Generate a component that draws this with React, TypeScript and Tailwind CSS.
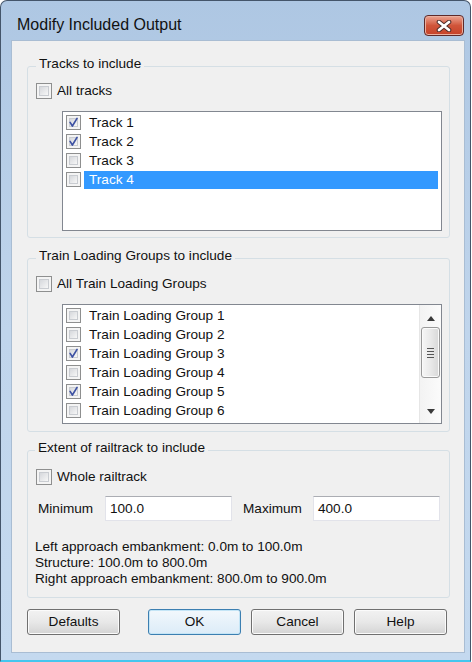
import type { ReactNode } from 'react'

function CheckBox({ checked, big }: { checked?: boolean; big?: boolean }) {
  return (
    <span
      className={`relative flex shrink-0 border border-[#8e8f8f] bg-[#f4f4f4] p-[2px] ${
        big ? 'h-[16px] w-[16px]' : 'h-[15px] w-[15px]'
      }`}
    >
      <span className="h-full w-full border border-[#c9ccd1] bg-gradient-to-br from-[#d6d8dc] to-[#f7f7f7]" />
      {checked && (
        <svg className="absolute inset-0 h-full w-full" viewBox="0 0 15 15">
          <path d="M3.6 7.4 L6.2 11.6 L11.6 2.8" fill="none" stroke="#3d51a3" strokeWidth="1.9" strokeLinecap="round" strokeLinejoin="round" />
        </svg>
      )}
    </span>
  )
}

function Group({ title, className, children }: { title: string; className: string; children: ReactNode }) {
  return (
    <fieldset className={`rounded-[3px] border border-[#d5dfe5] ${className}`}>
      <legend className="px-[3px] pb-[4px] leading-[16px]">{title}</legend>
      {children}
    </fieldset>
  )
}

function ListRow({ label, checked, selected }: { label: string; checked?: boolean; selected?: boolean }) {
  return (
    <div className="flex h-[19px] items-center pl-[3px] pr-[3px]">
      <CheckBox checked={checked} />
      <span
        className={`ml-[3px] flex h-[18px] flex-1 items-center pl-[5px] ${
          selected ? 'bg-[#3399ff] text-white' : ''
        }`}
      >
        {label}
      </span>
    </div>
  )
}

function Button({ label, primary, className = '' }: { label: string; primary?: boolean; className?: string }) {
  return (
    <button
      className={`flex h-[26px] w-[93px] items-center justify-center rounded-[3px] border ${
        primary
          ? 'border-[#3c7fb1] bg-gradient-to-b from-[#f2f8fc] to-[#dcecf8] shadow-[inset_0_0_0_1px_#c4e5f6]'
          : 'border-[#707070] bg-gradient-to-b from-[#f2f2f2] via-[#e8e8e8] to-[#d4d4d4] shadow-[inset_0_0_0_1px_#fbfbfb]'
      } ${className}`}
    >
      {label}
    </button>
  )
}

const tracks = [
  { label: 'Track 1', checked: true },
  { label: 'Track 2', checked: true },
  { label: 'Track 3' },
  { label: 'Track 4', selected: true },
]

const groups = [
  { label: 'Train Loading Group 1' },
  { label: 'Train Loading Group 2' },
  { label: 'Train Loading Group 3', checked: true },
  { label: 'Train Loading Group 4' },
  { label: 'Train Loading Group 5', checked: true },
  { label: 'Train Loading Group 6' },
]

export default function App() {
  return (
    <div className="h-[662px] w-[472px] bg-white font-['Liberation_Sans',Arial,sans-serif] text-[13.6px] leading-[16px] text-[#111]">
      <div className="flex h-full w-[471px] flex-col rounded-t-[7px] border-x border-t border-b-2 border-x-[#44556a] border-t-[#44556a] border-b-[#45c6ee] bg-gradient-to-b from-[#aec7e3] via-[#c0d5ec] to-[#c4d9ef]">
        {/* title bar */}
        <div className="flex h-[39px] shrink-0 items-start justify-between">
          <span className="ml-[16px] mt-[16px] text-[16px] leading-[16px] text-[#111]">Modify Included Output</span>
          <button className="mr-[6px] mt-[14px] flex h-[21px] w-[40px] items-center justify-center rounded-[4px] border border-[#5e2a2a] bg-gradient-to-b from-[#eba492] via-[#d0553a] to-[#c64128] shadow-[inset_0_0_0_1px_#eab0a0]">
            <svg width="16" height="12" viewBox="0 0 16 12">
              <path d="M3 2 L13 10 M13 2 L3 10" stroke="#4a2a28" strokeWidth="4.6" strokeLinecap="round" />
              <path d="M3 2 L13 10 M13 2 L3 10" stroke="#ffffff" strokeWidth="2.8" strokeLinecap="round" />
            </svg>
          </button>
        </div>

        {/* client */}
        <div className="mb-[7px] ml-[10px] mr-[5px] flex flex-1 flex-col border border-[#a9bdd3] bg-[#f0f0f0] pl-[15px] pr-[14px] pt-[15px]">
          <Group title="Tracks to include" className="pb-[6px] pl-[8px] pr-[7px] pt-[7px]">
            <label className="flex h-[16px] items-center gap-[5px]">
              <CheckBox big />
              <span>All tracks</span>
            </label>
            <div className="ml-[26px] mt-[12px] h-[120px] border border-[#828790] bg-white pt-[1px]">
              {tracks.map((t) => (
                <ListRow key={t.label} {...t} />
              ))}
            </div>
          </Group>

          <Group title="Train Loading Groups to include" className="mt-[10px] pb-[7px] pl-[8px] pr-[7px] pt-[8px]">
            <label className="flex h-[16px] items-center gap-[5px]">
              <CheckBox big />
              <span>All Train Loading Groups</span>
            </label>
            <div className="ml-[26px] mt-[12px] flex h-[120px] border border-[#828790] bg-white">
              <div className="flex-1 pt-[1px]">
                {groups.map((g) => (
                  <ListRow key={g.label} {...g} />
                ))}
              </div>
              <div className="flex w-[22px] flex-col border-l border-[#e6e6e6] bg-gradient-to-r from-[#f3f3f3] to-[#fbfbfb]">
                <div className="flex h-[22px] items-center justify-center pt-[4px]">
                  <svg width="8" height="5" viewBox="0 0 8 5">
                    <path d="M0 5 L4 0 L8 5 Z" fill="#3a3a3a" />
                  </svg>
                </div>
                <div className="ml-[1px] flex h-[51px] w-[19px] items-center justify-center rounded-[3px] border border-[#9a9a9a] bg-gradient-to-r from-[#f6f6f6] via-[#e9e9e9] to-[#d8d8d8] shadow-[inset_0_0_0_1px_#fafafa]">
                  <div className="flex w-[7px] flex-col gap-[2px]">
                    <span className="h-[1px] bg-[#555]" />
                    <span className="h-[1px] bg-[#555]" />
                    <span className="h-[1px] bg-[#555]" />
                    <span className="h-[1px] bg-[#555]" />
                  </div>
                </div>
                <div className="flex flex-1 items-end justify-center pb-[9px]">
                  <svg width="8" height="5" viewBox="0 0 8 5">
                    <path d="M0 0 L8 0 L4 5 Z" fill="#3a3a3a" />
                  </svg>
                </div>
              </div>
            </div>
          </Group>

          <Group title="Extent of railtrack to include" className="mt-[8px] pb-[10px] pl-[7px] pr-[7px] pt-[9px]">
            <label className="ml-[1px] flex h-[16px] items-center gap-[5px]">
              <CheckBox big />
              <span>Whole railtrack</span>
            </label>
            <div className="mt-[11px] flex items-center">
              <span className="ml-[3px] w-[67px]">Minimum</span>
              <div className="flex h-[25px] w-[127px] items-center border border-[#e2e3ea] border-t-[#abadb3] bg-white pl-[4px]">100.0</div>
              <span className="ml-[11px] w-[70px]">Maximum</span>
              <div className="flex h-[25px] w-[127px] items-center border border-[#e2e3ea] border-t-[#abadb3] bg-white pl-[4px]">400.0</div>
            </div>
            <div className="mt-[18px]">
              <p>Left approach embankment: 0.0m to 100.0m</p>
              <p>Structure: 100.0m to 800.0m</p>
              <p>Right approach embankment: 800.0m to 900.0m</p>
            </div>
          </Group>

          <div className="mt-[11px] flex">
            <Button label="Defaults" />
            <Button label="OK" primary className="ml-[28px]" />
            <Button label="Cancel" className="ml-[10px]" />
            <Button label="Help" className="ml-[10px]" />
          </div>
        </div>
      </div>
    </div>
  )
}
